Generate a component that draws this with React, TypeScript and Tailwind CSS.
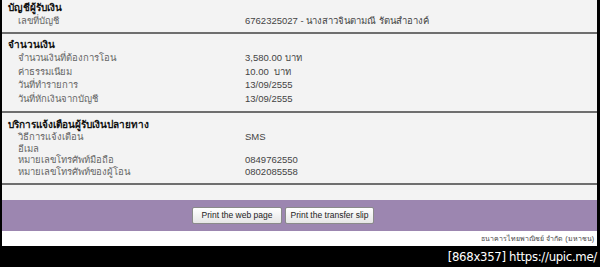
const font = { fontFamily: '"Liberation Sans", Tahoma, "Noto Sans", sans-serif' };

type Row = { label: string; value?: string };

function Section({
  title,
  rows,
  rowH,
  pt,
  pb,
}: {
  title: string;
  rows: Row[];
  rowH: string;
  pt: string;
  pb: string;
}) {
  return (
    <div className={`border-b-2 border-[#6e6e6e] ${pt} ${pb}`}>
      <div className="flex h-[13px] items-center pl-[6px] text-[10px] font-bold text-[#111]">{title}</div>
      {rows.map((r) => (
        <div key={r.label} className={`flex items-center text-[9.5px] ${rowH}`}>
          <span className="w-[243px] pl-[16px] text-[#666]">{r.label}</span>
          <span className="text-[#444]">{r.value}</span>
        </div>
      ))}
    </div>
  );
}

export default function App() {
  return (
    <div className="h-[267px] w-[600px] overflow-hidden bg-black leading-none" style={font}>
      <div className="ml-[2px] mr-[3px] flex flex-col bg-[#f3f3f3]">
        <Section
          title="บัญชีผู้รับเงิน"
          rows={[{ label: 'เลขที่บัญชี', value: '6762325027 - นางสาวจินตามณี รัตนสำอางค์' }]}
          rowH="h-[13px]"
          pt="pt-[1px]"
          pb="pb-[5px]"
        />
        <Section
          title="จำนวนเงิน"
          rows={[
            { label: 'จำนวนเงินที่ต้องการโอน', value: '3,580.00 บาท' },
            { label: 'ค่าธรรมเนียม', value: '10.00\u00a0 บาท' },
            { label: 'วันที่ทำรายการ', value: '13/09/2555' },
            { label: 'วันที่หักเงินจากบัญชี', value: '13/09/2555' },
          ]}
          rowH="h-[13.5px]"
          pt="pt-[4px]"
          pb="pb-[6px]"
        />
        <Section
          title="บริการแจ้งเตือนผู้รับเงินปลายทาง"
          rows={[
            { label: 'วิธีการแจ้งเตือน', value: 'SMS' },
            { label: 'อีเมล' },
            { label: 'หมายเลขโทรศัพท์มือถือ', value: '0849762550' },
            { label: 'หมายเลขโทรศัพท์ของผู้โอน', value: '0802085558' },
          ]}
          rowH="h-[11.5px]"
          pt="pt-[5px]"
          pb="pb-[6px]"
        />
        <div className="h-[15px]" />
        <div className="flex h-[31px] items-center gap-[3px] bg-[#9c86b0] pl-[190px]">
          <button className="h-[17px] w-[90px] whitespace-nowrap rounded-[2px] border border-[#8a8a8a] bg-gradient-to-b from-white to-[#e6e6e6] text-[8.5px] text-[#222]">
            Print the web page
          </button>
          <button className="h-[17px] w-[89px] whitespace-nowrap rounded-[2px] border border-[#8a8a8a] bg-gradient-to-b from-white to-[#e6e6e6] text-[8.5px] text-[#222]">
            Print the transfer slip
          </button>
        </div>
        <div className="flex h-[15px] items-center justify-end bg-white pr-[3px] text-[7px] text-[#444]">
          ธนาคารไทยพาณิชย์ จำกัด (มหาชน)
        </div>
      </div>
      <div className="flex h-[21px] items-center justify-end pr-[3px]">
        <span
          className="text-[13px] tracking-[-0.3px] text-white"
          style={{ fontFamily: '"DejaVu Sans Condensed", "Liberation Sans Narrow", "DejaVu Sans", sans-serif' }}
        >
          [868x357] https://upic.me/
        </span>
      </div>
    </div>
  );
}
